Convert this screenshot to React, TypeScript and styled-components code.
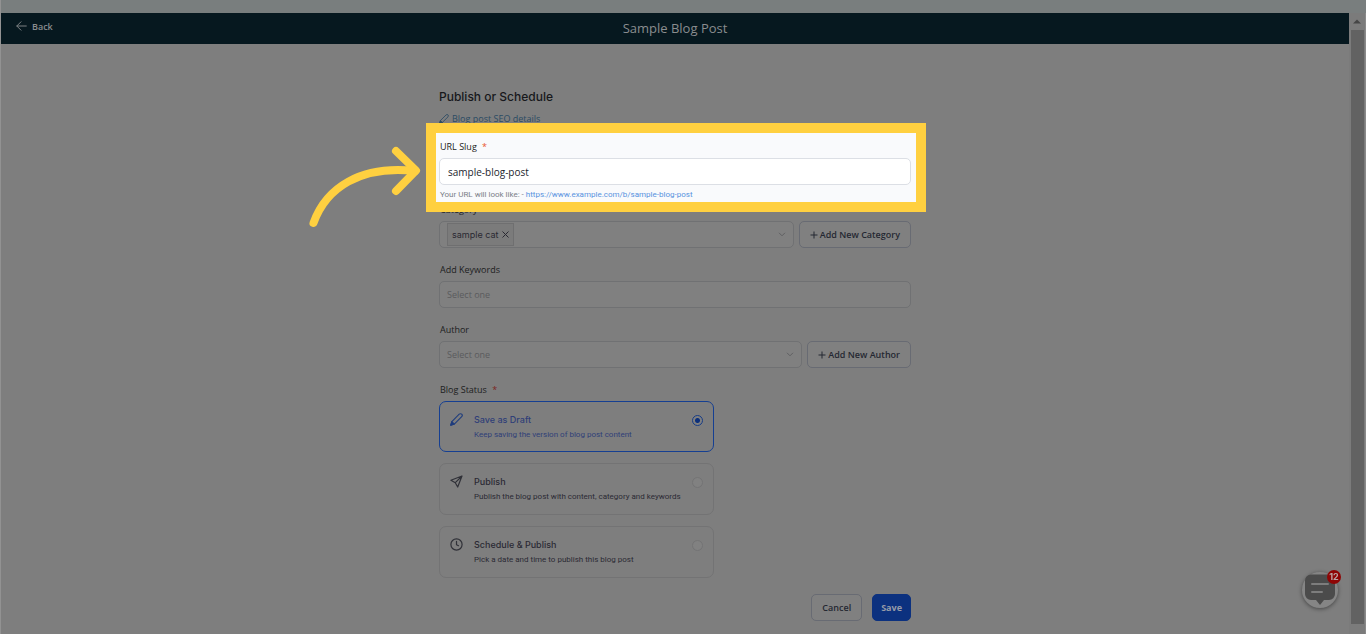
import React, { useState } from "react";
import styled, { createGlobalStyle } from "styled-components";

const sans = `"Open Sans", "Noto Sans", sans-serif`;
const inter = `Inter, "Liberation Sans", sans-serif`;
const small = `Roboto, "Open Sans", sans-serif`;

const GlobalStyle = createGlobalStyle`
  * { box-sizing: border-box; }
  body { margin: 0; background: #7e7e7e; font-family: ${sans}; font-size: 9px; color: #1c1d21; }
  button, input, select { font: inherit; color: inherit; margin: 0; }
`;

const Shell = styled.div`
  min-height: 100vh;
  display: flex;
  flex-direction: column;
  border-left: 1px solid #929292;
`;

const TopStrip = styled.div`
  height: 13px;
  background: #797e7e;
`;

const Body = styled.div`
  flex: 1;
  display: flex;
`;

const Page = styled.div`
  flex: 1;
  min-width: 0;
`;

const Header = styled.header`
  height: 31px;
  display: grid;
  grid-template-columns: 1fr auto 1fr;
  align-items: center;
  padding: 0 15px;
  background: #06181f;
  color: #8a8d8f;
`;

const BackButton = styled.button`
  justify-self: start;
  display: flex;
  align-items: center;
  gap: 5px;
  padding: 0 0 5px;
  border: 0;
  background: none;
  font-weight: 600;
`;

const PageTitle = styled.h1`
  margin: 0;
  padding-bottom: 1px;
  font-size: 13px;
  line-height: 18px;
  font-weight: 400;
`;

const Main = styled.form`
  width: 100%;
  max-width: 472px;
  margin: 0 auto;
  padding: 43px 0 13px;
`;

const Heading = styled.h2`
  margin: 0 0 4px;
  font: 500 12px/20px ${inter};
  color: #17181b;
`;

const SeoLink = styled.a`
  display: flex;
  width: max-content;
  align-items: center;
  gap: 3px;
  margin-bottom: 12px;
  line-height: 16px;
  color: #2b4b63;
  text-decoration: none;
`;

const Field = styled.div`
  margin-bottom: 14px;
`;

const Spotlight = styled(Field)`
  position: relative;
  z-index: 1;
  margin-bottom: 0;

  &::before {
    content: "";
    position: absolute;
    z-index: -1;
    inset: -16px -15px -10px -13px;
    border: 10px solid #ffd040;
    background: #f9fafc;
  }
`;

const Arrow = styled.svg`
  position: absolute;
  top: 0;
  left: -139px;
  overflow: visible;
`;

const Label = styled.label`
  display: block;
  width: max-content;
  margin: 0 0 3px 1px;
  line-height: 16px;
`;

const Required = styled.span<{ $bright?: boolean }>`
  margin-left: 3px;
  color: ${(p) => (p.$bright ? "#e8552d" : "#7c2622")};
`;

const Row = styled.div`
  display: flex;
  gap: 5px;
`;

const TextInput = styled.input<{ $bright?: boolean }>`
  display: block;
  width: 100%;
  height: 27px;
  padding: 0 ${(p) => (p.$bright ? "8px" : "7px")};
  border: 1px solid ${(p) => (p.$bright ? "#dcdfe5" : "#707173")};
  border-radius: 5px;
  background: ${(p) => (p.$bright ? "#ffffff" : "#808080")};
  font-size: ${(p) => (p.$bright ? "10px" : "9px")};
  color: #23252d;
  outline: 0;
  &::placeholder { color: #5a5b5d; opacity: 1; }
`;

const Hint = styled.p`
  margin: 3px 0 0 1px;
  font: 400 8px/14px ${small};
  color: #7b7f88;
  a { color: #5792e0; text-decoration: none; }
`;

const SelectBox = styled.div`
  flex: 1;
  min-width: 0;
  height: 27px;
  display: flex;
  align-items: center;
  padding: 0 7px;
  border: 1px solid #707173;
  border-radius: 5px;
  background: #808080;
`;

const BareInput = styled.input`
  flex: 1;
  min-width: 0;
  border: 0;
  background: none;
  outline: 0;
`;

const BareSelect = styled.select`
  flex: 1;
  min-width: 0;
  appearance: none;
  padding: 0;
  border: 0;
  background: none;
  outline: 0;
  color: #5a5b5d;
`;

const Tag = styled.span`
  display: flex;
  align-items: center;
  gap: 4px;
  height: 23px;
  padding: 0 4px;
  border: 1px solid #6f6f70;
  background: #7b7b7b;
  font: 400 9px/16px ${inter};
  color: #2a2932;
`;

const IconButton = styled.button`
  display: flex;
  padding: 0;
  border: 0;
  background: none;
`;

const Button = styled.button<{ $primary?: boolean }>`
  height: 27px;
  display: flex;
  align-items: center;
  gap: 2px;
  padding: 0 ${(p) => (p.$primary ? "8px" : "10px")};
  border: 1px solid ${(p) => (p.$primary ? "#0c317f" : "#686b73")};
  border-radius: 5px;
  background: ${(p) => (p.$primary ? "#0c317f" : "#808080")};
  color: ${(p) => (p.$primary ? "#979ba8" : "#252832")};
  font-weight: ${(p) => (p.$primary ? 700 : 600)};
  white-space: nowrap;
`;

const StatusGroup = styled.fieldset`
  margin: 0;
  padding: 0;
  border: 0;
`;

const Legend = styled.legend`
  margin: 0 0 3px 1px;
  padding: 0;
  line-height: 16px;
`;

const Options = styled.div`
  display: flex;
  flex-direction: column;
  gap: 11px;
  max-width: 275px;
`;

const Option = styled.label<{ $selected: boolean }>`
  display: flex;
  align-items: flex-start;
  gap: 11px;
  min-height: ${(p) => (p.$selected ? "51px" : "52px")};
  padding: 10px;
  border: 1px solid ${(p) => (p.$selected ? "#153f92" : "#737374")};
  border-radius: 7px;
  color: ${(p) => (p.$selected ? "#303f78" : "#2b2a34")};
  svg { margin-top: 1px; flex: none; color: ${(p) => (p.$selected ? "#1f3d7d" : "#303138")}; }
`;

const OptionText = styled.span`
  flex: 1;
  min-width: 0;
  display: flex;
  flex-direction: column;
`;

const OptionTitle = styled.span`
  font: 500 9px/16px ${inter};
`;

const OptionNote = styled.span`
  font: 400 8px/13px ${small};
  white-space: nowrap;
`;

const Radio = styled.input`
  appearance: none;
  flex: none;
  width: 11px;
  height: 11px;
  margin-top: 3px;
  border: 1px solid #747475;
  border-radius: 50%;
  background: #818181;
  &:checked {
    border-color: #173c86;
    background: radial-gradient(circle, #0b2f7b 0 2px, #808080 3px);
  }
`;

const Actions = styled.div`
  display: flex;
  justify-content: flex-end;
  gap: 10px;
  margin-top: 16px;
`;

const ScrollTrack = styled.div`
  width: 17px;
  display: flex;
  flex-direction: column;
  align-items: center;
  padding: 6px 2px 10px;
  background: #7b7b7b;
  border-right: 1px solid #8a8a8a;
`;

const ScrollThumb = styled.div`
  flex: 1;
  width: 13px;
  margin-top: 6px;
  background: #626262;
`;

const ChatButton = styled.button`
  position: fixed;
  right: 28px;
  bottom: 26px;
  width: 36px;
  height: 36px;
  padding: 0;
  border: 0;
  border-radius: 50%;
  background: #858585;
  box-shadow: 0 1px 4px rgba(0, 0, 0, 0.45);
`;

const Badge = styled.span`
  position: absolute;
  top: -2px;
  right: -3px;
  width: 14px;
  height: 14px;
  border-radius: 50%;
  background: #8e0505;
  color: #b9a5a5;
  font: 700 9px/14px ${inter};
  text-align: center;
`;

const Pen = ({ size }: { size: number }) => (
  <svg width={size} height={size} viewBox="0 0 12 12" fill="none" stroke="currentColor" strokeWidth="1" strokeLinejoin="round" strokeLinecap="round" aria-hidden="true">
    <path d="M.7 11.3 1.7 7.9 8.5 1.1a1.6 1.6 0 0 1 2.3 2.3L4 10.2Z" />
    <path d="m.7 11.3 1-3.4L4 10.2Z" fill="currentColor" />
  </svg>
);

const Plane = () => (
  <svg width="13" height="13" viewBox="0 0 13 13" fill="none" stroke="currentColor" strokeWidth="1.2" strokeLinejoin="round" aria-hidden="true">
    <path d="M12 1 .9 5.3l4.400 2.400L7.700 12ZM12 1 5.300 7.700" />
  </svg>
);

const Clock = () => (
  <svg width="13" height="13" viewBox="0 0 13 13" fill="none" stroke="currentColor" strokeWidth="1.2" strokeLinecap="round" strokeLinejoin="round" aria-hidden="true">
    <circle cx="6.5" cy="6.5" r="5.6" />
    <path d="M6.5 3.3v3.4l2 1" />
  </svg>
);

const Plus = () => (
  <svg width="8" height="8" viewBox="0 0 8 8" stroke="currentColor" aria-hidden="true">
    <path d="M4 .5v7M.5 4h7" />
  </svg>
);

const Chevron = () => (
  <svg width="8" height="5" viewBox="0 0 8 5" fill="none" stroke="#5f6062" aria-hidden="true">
    <path d="m1 .8 3 3 3-3" />
  </svg>
);

const statuses = [
  { id: "draft", title: "Save as Draft", note: "Keep saving the version of blog post content", icon: <Pen size={13} /> },
  { id: "publish", title: "Publish", note: "Publish the blog post with content, category and keywords", icon: <Plane /> },
  { id: "schedule", title: "Schedule & Publish", note: "Pick a date and time to publish this blog post", icon: <Clock /> },
];

export default function App() {
  const [status, setStatus] = useState("draft");
  const [slug, setSlug] = useState("sample-blog-post");

  return (
    <>
      <GlobalStyle />
      <Shell>
        <TopStrip />
        <Body>
          <Page>
            <Header>
              <BackButton type="button">
                <svg width="11" height="10" viewBox="0 0 11 10" fill="none" stroke="#7c8083" strokeLinecap="round" strokeLinejoin="round" aria-hidden="true">
                  <path d="M10.3 5H.8M5 .8.8 5 5 9.2" />
                </svg>
                Back
              </BackButton>
              <PageTitle>Sample Blog Post</PageTitle>
            </Header>
            <Main onSubmit={(e: React.FormEvent) => e.preventDefault()}>
              <Heading>Publish or Schedule</Heading>
              <SeoLink href="#seo">
                <Pen size={10} />
                Blog post SEO details
              </SeoLink>

              <Spotlight>
                <Arrow width="130" height="90" viewBox="300 139 130 90" fill="none" stroke="#ffd040" strokeWidth="8" strokeLinecap="round" strokeLinejoin="round" aria-hidden="true">
                  <path d="M313.500 223C326 188 360 165 415 171" />
                  <path d="M396 151 416 170.500 396 191" />
                </Arrow>
                <Label htmlFor="slug">
                  URL Slug <Required $bright>*</Required>
                </Label>
                <TextInput id="slug" $bright value={slug} onChange={(e) => setSlug(e.target.value)} />
                <Hint>
                  Your URL will look like: - <a href="#preview">https://www.example.com/b/{slug}</a>
                </Hint>
              </Spotlight>

              <Field>
                <Label htmlFor="category">Category</Label>
                <Row>
                  <SelectBox>
                    <Tag>
                      sample cat
                      <IconButton type="button" aria-label="Remove sample cat">
                        <svg width="7" height="7" viewBox="0 0 7 7" stroke="currentColor" aria-hidden="true">
                          <path d="m.5.5 6 6m0-6-6 6" />
                        </svg>
                      </IconButton>
                    </Tag>
                    <BareInput id="category" />
                    <Chevron />
                  </SelectBox>
                  <Button type="button"><Plus />Add New Category</Button>
                </Row>
              </Field>

              <Field>
                <Label htmlFor="keywords">Add Keywords</Label>
                <TextInput id="keywords" placeholder="Select one" />
              </Field>

              <Field>
                <Label htmlFor="author">Author</Label>
                <Row>
                  <SelectBox>
                    <BareSelect id="author" defaultValue="">
                      <option value="">Select one</option>
                    </BareSelect>
                    <Chevron />
                  </SelectBox>
                  <Button type="button"><Plus />Add New Author</Button>
                </Row>
              </Field>

              <StatusGroup>
                <Legend>
                  Blog Status <Required>*</Required>
                </Legend>
                <Options>
                  {statuses.map((s) => (
                    <Option key={s.id} $selected={s.id === status}>
                      {s.icon}
                      <OptionText>
                        <OptionTitle>{s.title}</OptionTitle>
                        <OptionNote>{s.note}</OptionNote>
                      </OptionText>
                      <Radio type="radio" name="status" checked={s.id === status} onChange={() => setStatus(s.id)} />
                    </Option>
                  ))}
                </Options>
              </StatusGroup>

              <Actions>
                <Button type="button">Cancel</Button>
                <Button type="submit" $primary>Save</Button>
              </Actions>
            </Main>
          </Page>
          <ScrollTrack>
            <svg width="8" height="5" viewBox="0 0 8 5" fill="#464646" aria-hidden="true">
              <path d="M4 .5 8 4.500H0Z" />
            </svg>
            <ScrollThumb />
          </ScrollTrack>
        </Body>
      </Shell>
      <ChatButton type="button" aria-label="Open chat, 12 unread">
        <svg width="36" height="36" viewBox="0 0 36 36" aria-hidden="true">
          <path d="M9 2.500h18a6 6 0 0 1 6 6V22a6 6 0 0 1-6 6h-5l-4 5-4-5H9a6 6 0 0 1-6-6V8.500a6 6 0 0 1 6-6Z" fill="#4b4b4b" />
          <path d="M10 12h16M10 20h10" stroke="#7d7d7d" strokeWidth="2" strokeLinecap="round" />
        </svg>
        <Badge>12</Badge>
      </ChatButton>
    </>
  );
}
